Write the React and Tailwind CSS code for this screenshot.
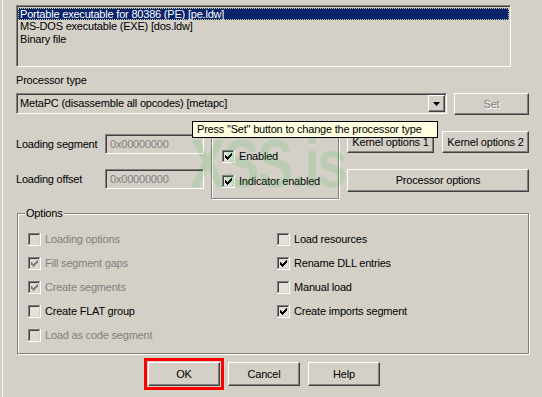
import React from 'react';

const CHECK = [[3, 5], [4, 6], [5, 7], [6, 6], [7, 5], [8, 4], [9, 3]];

const Box = ({ checked, disabled }) => (
  <svg width="13" height="13" viewBox="0 0 13 13" className="shrink-0">
    <rect x="0" y="0" width="13" height="13" fill="#ffffff" />
    <rect x="0" y="0" width="12" height="12" fill="#808080" />
    <rect x="1" y="1" width="11" height="11" fill="#d4d0c8" />
    <rect x="1" y="1" width="10" height="10" fill="#404040" />
    <rect x="2" y="2" width="9" height="9" fill={disabled ? '#dcd9d2' : '#e4e2dc'} />
    {checked &&
      CHECK.map(([x, y]) => (
        <rect key={x} x={x} y={y} width="1" height="3" fill={disabled ? '#808080' : '#000000'} />
      ))}
  </svg>
);

const Check = ({ label, checked, disabled }) => (
  <div className="flex items-center gap-[4px] h-[13px]">
    <Box checked={checked} disabled={disabled} />
    <span className={disabled ? 'text-[#808080]' : 'text-black'}>{label}</span>
  </div>
);

const Btn = ({ children, className = '', disabled }) => (
  <div
    className={`flex items-center justify-center border border-t-white border-l-white border-b-[#404040] border-r-[#404040] shadow-[inset_-1px_-1px_0_#808080] ${
      disabled ? 'text-[#808080] [text-shadow:1px_1px_0_#ffffff]' : 'text-black'
    } ${className}`}
  >
    {children}
  </div>
);

const Field = ({ label }) => (
  <div className="flex items-center">
    <span className="w-[89px]">{label}</span>
    <div className="w-[99px] h-[20px] flex items-center pl-[4px] border border-[#808080] border-b-white border-r-white shadow-[inset_1px_1px_0_#404040] text-[#808080]">
      0x00000000
    </div>
  </div>
);

export default function App() {
  return (
    <div className="w-[542px] h-[397px] bg-[#d4d0c8] relative overflow-hidden font-['Liberation_Sans',Arial,sans-serif] text-[11px] leading-[13px] tracking-[-0.2px] text-black shadow-[inset_2px_0_0_#d4d0c8,inset_3px_0_0_#f4f3ee]">
      <div className="pt-[5px] pl-[16px] flex flex-col">
        {/* loader list */}
        <div className="w-[495px] h-[62px] border border-[#808080] border-b-white border-r-white shadow-[inset_1px_1px_0_#404040] pt-[2px] px-[1px]">
          <div className="h-[12px] flex items-center pl-[2px] bg-[#0a246a] text-white outline-1 outline-dotted outline-[#c8c890] -outline-offset-1">
            Portable executable for 80386 (PE) [pe.ldw]
          </div>
          <div className="h-[13px] flex items-center pl-[2px]">MS-DOS executable (EXE) [dos.ldw]</div>
          <div className="h-[13px] flex items-center pl-[2px]">Binary file</div>
        </div>

        <div className="mt-[7px]">Processor type</div>

        <div className="mt-[6px] flex items-start">
          <div className="w-[431px] h-[21px] flex items-center justify-between pl-[3px] pr-[1px] border border-[#808080] border-b-white border-r-white shadow-[inset_1px_1px_0_#404040]">
            <span>MetaPC (disassemble all opcodes) [metapc]</span>
            <div className="w-[17px] h-[17px] flex items-center justify-center border border-t-white border-l-white border-b-[#404040] border-r-[#404040] shadow-[inset_-1px_-1px_0_#808080]">
              <svg width="7" height="4" viewBox="0 0 7 4">
                <path d="M0 0h7L3.5 4z" fill="#000" />
              </svg>
            </div>
          </div>
          <Btn disabled className="ml-[7px] w-[75px] h-[22px]">Set</Btn>
        </div>

        <div className="mt-[13px] flex items-start">
          <div className="w-[188px] pt-[6px] flex flex-col gap-[15px]">
            <Field label="Loading segment" />
            <Field label="Loading offset" />
          </div>
          <div className="ml-[7px] w-[128px] h-[71px] border border-[#808080] shadow-[inset_1px_1px_0_#ffffff,1px_1px_0_#ffffff] pl-[10px] pt-[21px] flex flex-col gap-[12px]">
            <Check label="Enabled" checked />
            <Check label="Indicator enabled" checked />
          </div>
          <div className="ml-[8px] pt-[3px] flex flex-col">
            <div className="flex gap-[8px]">
              <Btn className="w-[87px] h-[22px]">Kernel options 1</Btn>
              <Btn className="w-[87px] h-[22px]">Kernel options 2</Btn>
            </div>
            <Btn className="mt-[16px] w-[182px] h-[23px]">Processor options</Btn>
          </div>
        </div>

        {/* options group */}
        <div className="mt-[14px] ml-[1px] w-[512px] h-[141px] relative border border-[#808080] shadow-[inset_1px_1px_0_#ffffff,1px_1px_0_#ffffff] pl-[10px] pt-[19px] flex">
          <span className="absolute left-[7px] top-[-7px] px-[1px] bg-[#d4d0c8]">Options</span>
          <div className="w-[249px] flex flex-col gap-[11px]">
            <Check label="Loading options" disabled />
            <Check label="Fill segment gaps" checked disabled />
            <Check label="Create segments" checked disabled />
            <Check label="Create FLAT group" />
            <Check label="Load as code segment" disabled />
          </div>
          <div className="flex flex-col gap-[11px]">
            <Check label="Load resources" />
            <Check label="Rename DLL entries" checked />
            <Check label="Manual load" />
            <Check label="Create imports segment" checked />
          </div>
        </div>

        <div className="mt-[8px] flex">
          <Btn className="ml-[132px] w-[72px] h-[24px] outline-[3px] outline-solid outline-[#ff0000] outline-offset-[1px]">OK</Btn>
          <Btn className="ml-[8px] w-[72px] h-[24px]">Cancel</Btn>
          <Btn className="ml-[8px] w-[72px] h-[24px]">Help</Btn>
        </div>
      </div>

      {/* watermark */}
      <div className="absolute left-[190px] top-[129px] text-[68px] font-bold leading-none tracking-[-2px] origin-left scale-x-[0.78] text-[rgba(40,190,60,0.15)] pointer-events-none">
        XSS.is
      </div>

      {/* tooltip */}
      <div className="absolute left-[192px] top-[121px] w-[246px] h-[17px] flex items-center pl-[4px] border border-black bg-[#ffffe1]">
        Press "Set" button to change the processor type
      </div>
    </div>
  );
}
